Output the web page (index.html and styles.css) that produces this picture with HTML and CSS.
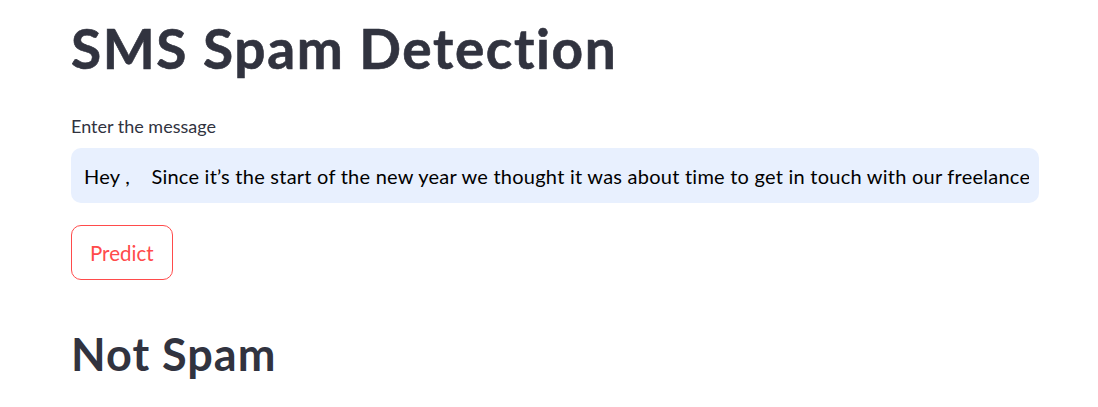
FILE: index.html
```html
<!DOCTYPE html>
<html lang="en">
<head>
<meta charset="utf-8">
<title>SMS Spam Detection</title>
<link rel="stylesheet" href="styles.css">
</head>
<body>
<main class="main">
  <h1 class="title">SMS Spam Detection</h1>
  <div class="field">
    <label class="field-label">Enter the message</label>
    <div class="text-input"><span class="text-value">Hey ,&nbsp;&nbsp;&nbsp; Since it’s the start of the new year we thought it was about time to get in touch with our freelance</span></div>
  </div>
  <div class="actions">
    <button class="btn">Predict</button>
  </div>
  <h2 class="result">Not Spam</h2>
</main>
</body>
</html>
```
FILE: styles.css
```css
html, body {
  margin: 0;
  padding: 0;
  background: #ffffff;
}
body {
  font-family: "Lato", "Open Sans", sans-serif;
  color: #31333f;
}
.main {
  width: 968px;
  padding: 0 0 0 71px;
  display: flex;
  flex-direction: column;
  align-items: flex-start;
}
.title {
  margin: 0;
  padding-top: 15px;
  font-size: 55px;
  line-height: 66px;
  font-weight: 700;
  letter-spacing: 1.6px;
  color: #31333f;
  -webkit-text-stroke: 0.6px #31333f;
}
.field {
  width: 100%;
  display: flex;
  flex-direction: column;
  margin-top: 34px;
}
.field-label {
  font-size: 18px;
  line-height: 22px;
  color: #31333f;
}
.text-input {
  margin-top: 11px;
  height: 55px;
  box-sizing: border-box;
  background: #e8f0fe;
  border-radius: 10px;
  padding: 0 10px 0 13px;
  display: flex;
  align-items: center;
  overflow: hidden;
}
.text-value {
  display: block;
  white-space: nowrap;
  overflow: hidden;
  font-size: 20px;
  letter-spacing: 0.24px;
  color: #000000;
}
.actions {
  margin-top: 22px;
}
.btn {
  height: 55px;
  padding: 0 18px;
  box-sizing: border-box;
  border: 1px solid #ff4b4b;
  border-radius: 10px;
  background: #ffffff;
  color: #ff4b4b;
  font-family: inherit;
  font-size: 20.5px;
  cursor: pointer;
}
.result {
  margin: 0;
  margin-top: 47px;
  font-size: 45px;
  line-height: 54px;
  font-weight: 700;
  letter-spacing: 1px;
  color: #31333f;
}
```
